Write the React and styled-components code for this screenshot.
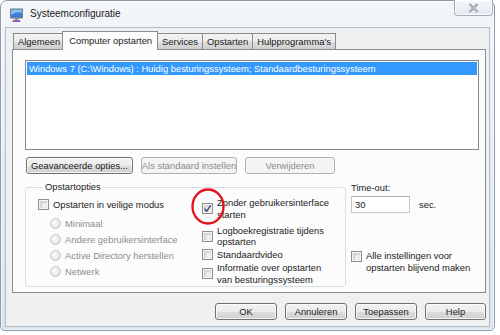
import React from "react";
import styled, { createGlobalStyle, css } from "styled-components";

const GlobalStyle = createGlobalStyle`
  body {
    margin: 0;
    background: #ffffff;
    font-family: "Liberation Sans", Arial, sans-serif;
    font-size: 9.4px;
    color: #1b1b1b;
  }
`;

const Window = styled.div`
  width: 495px;
  height: 331px;
  box-sizing: border-box;
  border: 1px solid #8e9aa8;
  border-radius: 7px 7px 5px 5px;
  background: linear-gradient(180deg, #f3f6f9 0%, #e6ecf2 45%, #dbe3ec 100%);
  padding: 0 4px 3px 4px;
  display: flex;
  flex-direction: column;
  box-shadow: inset 0 0 0 1px rgba(255, 255, 255, 0.7);
`;

const TitleBar = styled.div`
  height: 26px;
  display: flex;
  align-items: flex-start;
`;

const TitleIcon = styled.svg`
  margin: 6px 0 0 4px;
  flex-shrink: 0;
`;

const TitleText = styled.div`
  margin: 6px 0 0 5px;
  font-size: 10px;
  line-height: 14px;
  color: #1a1a1a;
`;

const CloseButton = styled.div`
  margin: -1px -3px 0 auto;
  width: 39px;
  height: 16px;
  box-sizing: border-box;
  border: 1px solid #a3adb8;
  border-top: none;
  border-radius: 0 0 4px 4px;
  background: linear-gradient(180deg, #f4f7fa, #e2e8ef);
  display: flex;
  align-items: center;
  justify-content: center;
  box-shadow: inset 0 0 0 1px rgba(255, 255, 255, 0.8);
`;

const Client = styled.div`
  flex: 1;
  background: #f0f0f0;
  border: 1px solid #b4bcc6;
  padding: 4px 3px 6px 6px;
  display: flex;
  flex-direction: column;
`;

const TabRow = styled.div`
  height: 17px;
  display: flex;
  align-items: flex-end;
  padding-left: 1px;
`;

const Tab = styled.div`
  height: 16px;
  box-sizing: border-box;
  border: 1px solid #898c95;
  border-bottom: none;
  margin-right: -1px;
  padding: 0 4px;
  line-height: 15px;
  white-space: nowrap;
  background: linear-gradient(180deg, #f3f3f3 0%, #ebebeb 50%, #dddddd 51%, #cfcfcf 100%);
  ${(p) =>
    p.$active &&
    css`
      height: 19px;
      margin: 0 -1px -1px -2px;
      padding: 0 5px 0 6px;
      background: #fcfcfc;
      position: relative;
      z-index: 1;
      line-height: 17px;
    `}
`;

const Panel = styled.div`
  height: 244px;
  box-sizing: border-box;
  border: 1px solid #898c95;
  background: #fcfcfc;
  padding: 10px 6px 0 12px;
  display: flex;
  flex-direction: column;
`;

const ListBox = styled.div`
  height: 90px;
  box-sizing: border-box;
  border: 1px solid #828790;
  background: #ffffff;
  padding: 1px;
`;

const ListItem = styled.div`
  height: 13px;
  line-height: 13px;
  padding-left: 2px;
  white-space: nowrap;
  ${(p) =>
    p.$selected &&
    css`
      background: #3399ff;
      color: #ffffff;
    `}
`;

const ButtonRow = styled.div`
  display: flex;
  gap: 8px;
  margin-top: ${(p) => p.$mt || 7}px;
  padding-left: 1px;
  justify-content: ${(p) => (p.$end ? "flex-end" : "flex-start")};
`;

const Button = styled.div`
  width: ${(p) => p.$w}px;
  height: 17px;
  box-sizing: border-box;
  border: 1px solid #707070;
  border-radius: 3px;
  background: linear-gradient(180deg, #f2f2f2 0%, #ebebeb 50%, #dddddd 51%, #cfcfcf 100%);
  box-shadow: inset 0 0 0 1px rgba(255, 255, 255, 0.75);
  display: flex;
  align-items: center;
  justify-content: center;
  white-space: nowrap;
  color: #1b1b1b;
  ${(p) =>
    p.disabled &&
    css`
      border-color: #adb2b5;
      background: #f4f4f4;
      box-shadow: none;
      color: #8b8b8b;
    `}
`;

const Lower = styled.div`
  display: flex;
  gap: 5px;
  margin-top: 7px;
`;

const GroupBox = styled.fieldset`
  margin: 0;
  width: 321px;
  height: 106px;
  box-sizing: border-box;
  border: 1px solid #d5dfe5;
  border-radius: 3px;
  padding: 4px 0 0 12px;
  display: grid;
  grid-template-columns: 164px 1fr;
  align-content: start;
`;

const Legend = styled.legend`
  margin-left: 5px;
  padding: 0 2px;
  line-height: 12px;
`;

const Column = styled.div`
  display: flex;
  flex-direction: column;
`;

const CheckRow = styled.div`
  display: flex;
  align-items: ${(p) => (p.$top ? "flex-start" : "center")};
  gap: 4px;
  line-height: 11.5px;
  position: relative;
  margin-top: ${(p) => p.$mt || 0}px;
  color: ${(p) => (p.$disabled ? "#8d8d8d" : "#1b1b1b")};
`;

const Box = styled.div`
  width: 11px;
  height: 11px;
  flex-shrink: 0;
  box-sizing: border-box;
  border: 1px solid #8e8f8f;
  background: #f4f4f4;
  box-shadow: inset 0 0 0 1px #f4f4f4, inset 1px 1px 2px 2px #d2d2d2;
  display: flex;
  align-items: center;
  justify-content: center;
  margin-top: ${(p) => (p.$top ? 1 : 0)}px;
`;

const Radio = styled.div`
  width: 11px;
  height: 11px;
  flex-shrink: 0;
  box-sizing: border-box;
  border-radius: 50%;
  border: 1px solid #c6c6c6;
  background: radial-gradient(circle at 40% 40%, #fbfbfb 0%, #eaeaea 60%, #dcdcdc 100%);
`;

const RadioList = styled.div`
  display: flex;
  flex-direction: column;
  gap: 4.5px;
  margin: 7px 0 0 12px;
`;

const RightCol = styled.div`
  display: flex;
  flex-direction: column;
  gap: 1.5px;
`;

const Side = styled.div`
  display: flex;
  flex-direction: column;
  padding-top: 1px;
`;

const Label = styled.div`
  line-height: 12px;
`;

const InputRow = styled.div`
  display: flex;
  align-items: center;
  gap: 9px;
  margin-top: 2px;
`;

const Input = styled.div`
  width: 59px;
  height: 17px;
  box-sizing: border-box;
  border: 1px solid #c5c8d0;
  border-top-color: #abadb3;
  background: #ffffff;
  padding-left: 3px;
  line-height: 15px;
`;

const Annotation = styled.svg`
  position: absolute;
  left: -13px;
  top: -10px;
  pointer-events: none;
`;

const Tick = () => (
  <svg width="9" height="9" viewBox="0 0 9 9">
    <path d="M1.5 4.8 L3.6 7.2 L7.8 1.4" fill="none" stroke="#3d4f8c" strokeWidth="1.5" />
  </svg>
);

const MonitorIcon = () => (
  <TitleIcon width="16" height="16" viewBox="0 0 16 16">
    <rect x="1" y="1.5" width="13" height="10" rx="1" fill="#6f7a8a" />
    <rect x="2.2" y="2.7" width="10.6" height="7.6" fill="#3f7fd6" />
    <path d="M2.2 2.7 H12.8 V6 Q7 4 2.2 8 Z" fill="#8cc0f2" />
    <rect x="5.5" y="11.5" width="4" height="2" fill="#7d8796" />
    <rect x="3.5" y="13.3" width="8" height="1.7" rx="0.5" fill="#8e5aa8" />
  </TitleIcon>
);

export default function App() {
  return (
    <>
      <GlobalStyle />
      <Window>
        <TitleBar>
          <MonitorIcon />
          <TitleText>Systeemconfiguratie</TitleText>
          <CloseButton>
            <svg width="11" height="10" viewBox="0 0 11 10">
              <path d="M1.5 1 L9.5 9 M9.5 1 L1.5 9" stroke="#8a8f96" strokeWidth="2.2" />
              <path d="M1.5 1 L9.5 9 M9.5 1 L1.5 9" stroke="#eef1f4" strokeWidth="0.7" />
            </svg>
          </CloseButton>
        </TitleBar>
        <Client>
          <TabRow>
            <Tab>Algemeen</Tab>
            <Tab $active>Computer opstarten</Tab>
            <Tab>Services</Tab>
            <Tab>Opstarten</Tab>
            <Tab>Hulpprogramma's</Tab>
          </TabRow>
          <Panel>
            <ListBox>
              <ListItem $selected>
                Windows 7 (C:\Windows) : Huidig besturingssysteem; Standaardbesturingssysteem
              </ListItem>
            </ListBox>
            <ButtonRow>
              <Button $w={107}>Geavanceerde opties...</Button>
              <Button $w={96} disabled>
                Als standaard instellen
              </Button>
              <Button $w={90} disabled>
                Verwijderen
              </Button>
            </ButtonRow>
            <Lower>
              <GroupBox>
                <Legend>Opstartopties</Legend>
                <Column>
                  <CheckRow $mt={2}>
                    <Box />
                    <span>Opstarten in veilige modus</span>
                  </CheckRow>
                  <RadioList>
                    {["Minimaal", "Andere gebruikersinterface", "Active Directory herstellen", "Netwerk"].map(
                      (t) => (
                        <CheckRow key={t} $disabled>
                          <Radio />
                          <span>{t}</span>
                        </CheckRow>
                      )
                    )}
                  </RadioList>
                </Column>
                <RightCol>
                  <CheckRow>
                    <Box>
                      <Tick />
                    </Box>
                    <span>
                      Zonder gebruikersinterface
                      <br />
                      starten
                    </span>
                    <Annotation width="38" height="40" viewBox="0 0 38 40">
                      <ellipse cx="19" cy="19.5" rx="15.5" ry="17" fill="none" stroke="#e3141b" strokeWidth="2.4" />
                    </Annotation>
                  </CheckRow>
                  <CheckRow $mt={3}>
                    <Box />
                    <span>
                      Logboekregistratie tijdens
                      <br />
                      opstarten
                    </span>
                  </CheckRow>
                  <CheckRow>
                    <Box />
                    <span>Standaardvideo</span>
                  </CheckRow>
                  <CheckRow>
                    <Box />
                    <span>
                      Informatie over opstarten
                      <br />
                      van besturingssysteem
                    </span>
                  </CheckRow>
                </RightCol>
              </GroupBox>
              <Side>
                <Label>Time-out:</Label>
                <InputRow>
                  <Input>30</Input>
                  <span>sec.</span>
                </InputRow>
                <CheckRow $top $mt={37}>
                  <Box $top />
                  <span>
                    Alle instellingen voor
                    <br />
                    opstarten blijvend maken
                  </span>
                </CheckRow>
              </Side>
            </Lower>
          </Panel>
          <ButtonRow $end $mt={10}>
            <Button $w={62}>OK</Button>
            <Button $w={62}>Annuleren</Button>
            <Button $w={62}>Toepassen</Button>
            <Button $w={61}>Help</Button>
          </ButtonRow>
        </Client>
      </Window>
    </>
  );
}
